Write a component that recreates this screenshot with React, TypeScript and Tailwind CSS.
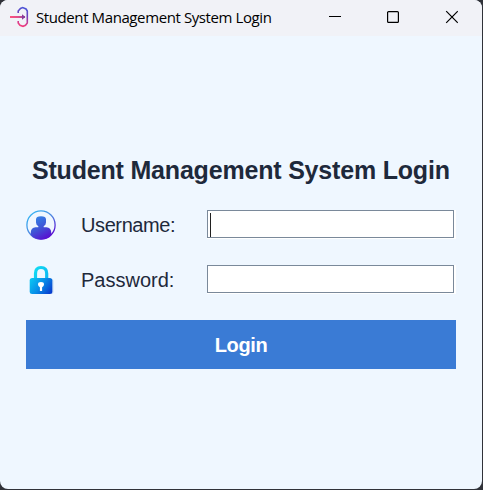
import React from "react";

function LoginGlyph() {
  return (
    <svg width="20" height="22" viewBox="0 0 20 22" fill="none">
      <defs>
        <linearGradient id="door" x1="10" y1="21" x2="16" y2="2" gradientUnits="userSpaceOnUse">
          <stop offset="0" stopColor="#ff3e78" />
          <stop offset="0.3" stopColor="#c83c94" />
          <stop offset="0.6" stopColor="#7240b8" />
          <stop offset="1" stopColor="#4a55d8" />
        </linearGradient>
        <linearGradient id="arrow" x1="0" y1="11" x2="16" y2="11" gradientUnits="userSpaceOnUse">
          <stop offset="0" stopColor="#ff4070" />
          <stop offset="0.5" stopColor="#dd3c80" />
          <stop offset="1" stopColor="#7a3a98" />
        </linearGradient>
      </defs>
      <path d="M8.2 7V5L10.5 2.5L12.7 1.6L16 3L17.3 5V17L15.5 19.3L13 20.3L10 19.3L8.2 17V15" stroke="url(#door)" strokeWidth="1.6" />
      <rect x="0" y="10.1" width="15" height="1.8" fill="url(#arrow)" />
      <path d="M12 8.2L15.4 11L12 13.8Z" fill="#8a3a98" />
    </svg>
  );
}

function UserIcon() {
  return (
    <svg width="30" height="30" viewBox="0 0 30 30" fill="none">
      <defs>
        <linearGradient id="ring" x1="5" y1="3" x2="25" y2="27" gradientUnits="userSpaceOnUse">
          <stop offset="0" stopColor="#35b4f2" />
          <stop offset="0.5" stopColor="#4f86e0" />
          <stop offset="1" stopColor="#5a00d0" />
        </linearGradient>
        <linearGradient id="person" x1="9" y1="6" x2="22" y2="29" gradientUnits="userSpaceOnUse">
          <stop offset="0" stopColor="#3388e8" />
          <stop offset="0.5" stopColor="#4054d6" />
          <stop offset="1" stopColor="#5b08d0" />
        </linearGradient>
      </defs>
      <circle cx="15" cy="15" r="14.1" stroke="url(#ring)" strokeWidth="1.3" />
      <path d="M10 9.5Q10 6.2 15 6.2Q20 6.2 20 9.5V12.5Q20 14.8 17.7 16V17.3H20.5Q25 18 25.2 22V25Q21 29.4 15 29.4Q9 29.4 4.8 25V22Q5 18 9.5 17.3H12.3V16Q10 14.8 10 12.5Z" fill="url(#person)" />
    </svg>
  );
}

function LockIcon() {
  return (
    <svg width="30" height="30" viewBox="0 0 30 30" fill="none">
      <defs>
        <linearGradient id="shackle" x1="8" y1="2" x2="22" y2="12" gradientUnits="userSpaceOnUse">
          <stop offset="0" stopColor="#12dff2" />
          <stop offset="1" stopColor="#0cb8f2" />
        </linearGradient>
        <linearGradient id="lockbody" x1="4" y1="12" x2="26" y2="28" gradientUnits="userSpaceOnUse">
          <stop offset="0" stopColor="#0acdf4" />
          <stop offset="0.5" stopColor="#078ee8" />
          <stop offset="1" stopColor="#0836cc" />
        </linearGradient>
      </defs>
      <rect x="5" y="14" width="22.5" height="15" rx="2" fill="#c6dbf2" />
      <path d="M9.5 14V8.5Q9.5 2.5 15 2.5Q20.7 2.5 20.7 8.5V14" stroke="url(#shackle)" strokeWidth="3.2" />
      <rect x="3.7" y="13" width="22.6" height="16" rx="2.5" fill="url(#lockbody)" />
      <path d="M13.9 22.2Q12 21.2 12 19.4Q12 17 15 17Q18 17 18 19.4Q18 21.2 16.1 22.2V26H13.9Z" fill="white" />
    </svg>
  );
}

function Field({ focused = false }: { focused?: boolean }) {
  return (
    <div className="mb-px h-[29px] w-[249px] border-r-2 border-b border-white">
      <div className="flex h-7 w-[247px] items-end border border-[#7a899a] bg-white pl-[2px]">
        {focused && <span className="h-6 w-px bg-[#202020]" />}
      </div>
    </div>
  );
}

export default function App() {
  return (
    <div className="h-[490px] w-[483px] overflow-hidden bg-[#303239]">
      <div className="flex h-[489px] w-[482px] flex-col overflow-hidden rounded-lg bg-[#eff7ff]">
        <header className="flex h-9 shrink-0 items-center bg-[#f1f2f7] pl-2.5 text-black">
          <div className="-mt-0.5">
            <LoginGlyph />
          </div>
          <span className="-mt-0.5 ml-1.5 w-[293px] whitespace-nowrap font-['Open_Sans',sans-serif] text-[15px] leading-5 tracking-[-0.4px]">
            Student Management System Login
          </span>
          <svg width="129" height="14" viewBox="0 0 129 14" fill="none" stroke="currentColor" className="-mt-0.5">
            <path d="M0 6.5H12" />
            <rect x="58.6" y="1.6" width="10.8" height="10.8" rx="1" strokeWidth="1.2" />
            <path d="M117.2 1.2L128.8 12.8M128.8 1.2L117.2 12.8" strokeWidth="1.2" />
          </svg>
        </header>
        <main className="flex flex-col pt-[118px] pl-[26px] font-['Liberation_Sans',Arial,sans-serif] text-[#1e293b]">
          <h1 className="pl-1.5 text-[25px] leading-8 font-bold tracking-[-0.19px] whitespace-nowrap">Student Management System Login</h1>
          <div className="mt-6 flex h-[30px] items-center">
            <UserIcon />
            <span className="w-[151px] pl-[25px] text-[20px] leading-6 tracking-[-0.4px]">Username:</span>
            <Field focused />
          </div>
          <div className="mt-[25px] flex h-[30px] items-center">
            <LockIcon />
            <span className="w-[151px] pl-[25px] text-[20px] leading-6">Password:</span>
            <Field />
          </div>
          <button className="mt-[25px] h-[49px] w-[430px] bg-[#3a7bd5] text-[20px] leading-6 font-bold tracking-[-0.4px] text-white">Login</button>
        </main>
      </div>
    </div>
  );
}
